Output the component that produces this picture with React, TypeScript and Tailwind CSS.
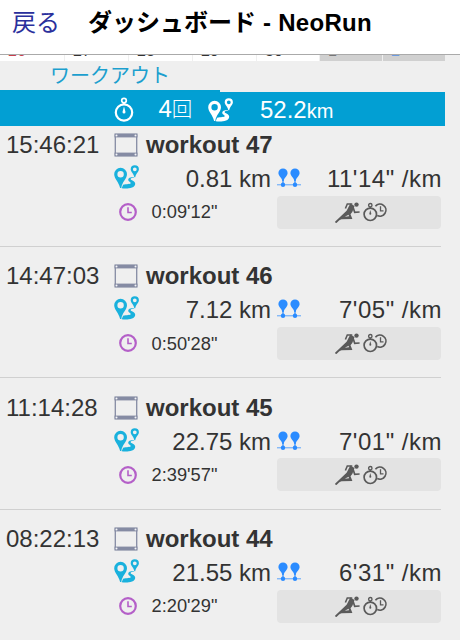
import React from 'react';

interface Workout {
  time: string;
  title: string;
  distance: string;
  pace: string;
  duration: string;
}

const workouts: Workout[] = [
  { time: '15:46:21', title: 'workout 47', distance: '0.81 km', pace: '11\'14" /km', duration: '0:09\'12"' },
  { time: '14:47:03', title: 'workout 46', distance: '7.12 km', pace: '7\'05" /km', duration: '0:50\'28"' },
  { time: '11:14:28', title: 'workout 45', distance: '22.75 km', pace: '7\'01" /km', duration: '2:39\'57"' },
  { time: '08:22:13', title: 'workout 44', distance: '21.55 km', pace: '6\'31" /km', duration: '2:20\'29"' },
];

const days = [
  { label: '26', cell: 'w-[64px] bg-white', text: 'text-[#c8404c]' },
  { label: '27', cell: 'w-[63px] bg-white', text: 'text-[#333]' },
  { label: '28', cell: 'w-[63px] bg-white', text: 'text-[#333]' },
  { label: '29', cell: 'w-[63px] bg-white', text: 'text-[#333]' },
  { label: '30', cell: 'w-[62px] bg-white', text: 'text-[#333]' },
  { label: '1', cell: 'w-[62px] bg-[#d0d0d0]', text: 'text-[#777]' },
  { label: '2', cell: 'w-[62px] bg-[#d0d0d0]', text: 'text-[#6c9be0]' },
];

const StopwatchIcon = ({ className }: { className: string }) => (
  <svg viewBox="0 0 20 25" fill="none" stroke="currentColor" className={className}>
    <circle cx="10" cy="15.500" r="8.200" strokeWidth="2.200" />
    <circle cx="10" cy="3.600" r="2.300" strokeWidth="1.700" />
    <path d="M10 5.500v2" strokeWidth="2.400" />
    <path d="M10 9.500l1.500 5.500a1.500 1.500 0 1 1-3 0z" fill="currentColor" stroke="none" />
  </svg>
);

const RouteIcon = ({ className }: { className: string }) => (
  <svg viewBox="0 0 25 24" fill="currentColor" className={className}>
    <path
      fillRule="evenodd"
      d="M6.600 2.800A6.400 6.400 0 0 0 .2 9.200c0 4.400 4.600 7.600 5.900 13.800h1.200C8 16.800 13 13.600 13 9.200a6.400 6.400 0 0 0-6.400-6.400zM6.600 6a3.200 3.200 0 1 1 0 6.400 3.200 3.200 0 0 1 0-6.400z"
    />
    <path
      fillRule="evenodd"
      d="M20.800.2a4.100 4.100 0 0 0-4.100 4.100c0 2.700 3 4.200 3.700 8h.8c.7-3.800 3.700-5.300 3.700-8A4.100 4.100 0 0 0 20.800.2zM20.800 2.400a1.900 1.900 0 1 1 0 3.800 1.900 1.900 0 0 1 0-3.800z"
    />
    <path d="M20 12.100c-3.900.2-6 1.200-5.800 2.800.2 1.500 2.700 2 2.600 3.200-.2 1.300-4.300 1-7.700 1.700L7.700 23.300c4.300.6 13.500.5 13.500-4.500 0-2.900-4.600-3.400-4.600-4.700 0-.8 1.600-1.400 3.400-1.500z" />
  </svg>
);

const FilmIcon = () => (
  <svg viewBox="0 0 24 24" className="h-6 w-6">
    <rect x="1.300" y="2" width="21.400" height="20" fill="none" stroke="#858ba3" strokeWidth="1.300" />
    <rect x=".5" y=".4" width="23" height="4" fill="#858ba3" />
    <rect x=".5" y="19.600" width="23" height="4" fill="#858ba3" />
    <g fill="#f4f4f8">
      <circle cx="2.500" cy="2.500" r="1" />
      <circle cx="21.500" cy="2.500" r="1" />
      <circle cx="2.500" cy="21.500" r="1" />
      <circle cx="21.500" cy="21.500" r="1" />
    </g>
  </svg>
);

const PaceIcon = () => (
  <svg viewBox="0 0 24 20" fill="#2b8cff" className="h-5 w-6 -translate-y-px">
    <path d="M6 .4A4.600 4.600 0 0 0 1.400 5c0 3.200 3.600 4.500 3.900 8h1.400c.3-3.500 3.900-4.800 3.900-8A4.600 4.600 0 0 0 6 .4z" />
    <path d="M18 .4A4.600 4.600 0 0 0 13.400 5c0 3.200 3.600 4.500 3.900 8h1.400c.3-3.500 3.900-4.800 3.900-8A4.600 4.600 0 0 0 18 .4z" />
    <path d="M5.400 10h1.200v6H5.400zM17.400 10h1.200v6h-1.200z" />
    <circle cx="6" cy="16.700" r="2.200" />
    <circle cx="18" cy="16.700" r="2.200" />
    <path d="M0 16.800h24" stroke="#2b8cff" strokeWidth="1" strokeOpacity=".75" />
  </svg>
);

const ClockIcon = () => (
  <svg viewBox="0 0 18 18" fill="none" stroke="#b45fc8" className="h-[18px] w-[18px]">
    <circle cx="9" cy="9" r="7.800" strokeWidth="2.200" />
    <path d="M9 4.300v5.200h3.800" strokeWidth="1.600" />
  </svg>
);

const RunnerIcon = () => (
  <svg viewBox="0 0 25 21" fill="none" stroke="#5a5a5a" className="h-[21px] w-[25px]">
    <circle cx="21.500" cy="2.600" r="2.200" fill="#5a5a5a" stroke="none" />
    <path d="M10.400 6.500l1.900-4.500h5" strokeWidth="1.600" />
    <path d="M15.300 1.600l4.200 2.400-2.200 6-1.800 2.300 1.900 4.600-10.700.3-3 .8 7.200-8 1.500-2.800z" fill="#5a5a5a" stroke="none" />
    <path d="M17.800 4.600l1.900 5.700 4.900-.3" strokeWidth="1.700" />
    <path d="M.5 20.600L12 9.800" strokeWidth="1.900" />
    <path d="M9.800 14.700l3.800-1.900.4 1.500z" fill="#e3e3e3" stroke="none" />
  </svg>
);

const TimersIcon = () => (
  <svg viewBox="0 0 25 20" fill="none" stroke="#5a5a5a" className="h-5 w-[25px]">
    <circle cx="7.300" cy="12.300" r="6.200" strokeWidth="1.700" />
    <circle cx="7.300" cy="3.200" r="1.700" strokeWidth="1.400" />
    <path d="M7.300 4.800v1.500" strokeWidth="1.600" />
    <path d="M7.300 8l1 3.800a1 1 0 1 1-2 0z" fill="#5a5a5a" stroke="none" />
    <path d="M12.400 4.200A6 6 0 1 1 14.200 13.500" strokeWidth="1.700" />
    <path d="M17.500 4.300v4.500h3" strokeWidth="1.300" />
  </svg>
);

const WorkoutRow = ({ workout, first }: { workout: Workout; first: boolean }) => (
  <li className={`flex w-[441px] border-b border-[#d0d0d0] pb-[17px] ${first ? 'pt-px' : 'pt-[11.400px]'}`}>
    <time className="w-[113px] shrink-0 pl-1.5 text-[24px] leading-[36px]">{workout.time}</time>
    <div className="flex-1">
      <div className="flex h-9 items-center gap-2 pl-px">
        <FilmIcon />
        <h3 className="text-[24px] leading-9 font-bold">{workout.title}</h3>
      </div>
      <div className="flex h-8 items-center pl-px text-[24px] leading-8">
        <RouteIcon className="h-6 w-[25px] -translate-y-[2px] text-[#19b1dd]" />
        <span className="flex-1 text-right">{workout.distance}</span>
        <span className="-mr-px flex w-[171px] items-center justify-between pl-[6px]">
          <PaceIcon />
          <span className="tracking-[0.500px]">{workout.pace}</span>
        </span>
      </div>
      <div className="flex h-[34px] items-center pl-[5.500px]">
        <ClockIcon />
        <span className="flex-1 pl-[15px] text-[18.300px]">{workout.duration}</span>
        <button className="flex h-[33px] w-[164px] items-center justify-center gap-[3px] rounded bg-[#e3e3e3] pl-1">
          <RunnerIcon />
          <TimersIcon />
        </button>
      </div>
    </div>
  </li>
);

export default function App() {
  return (
    <div className="h-[640px] w-[460px] overflow-hidden bg-[#efefef] font-['Liberation_Sans','Noto_Sans_CJK_JP',sans-serif] text-[#333]">
      <header className="flex h-[55px] items-center border-b border-[#aaa] bg-white pb-[9px] pl-3 whitespace-nowrap text-black">
        <button className="w-[76px] text-left text-[24px] text-[#2a2f9c]">戻る</button>
        <h1 className="text-[24px] font-bold">
          ダッシュボード<span className="tracking-[0.300px]"> - NeoRun</span>
        </h1>
      </header>

      <div className="flex h-1.5 gap-px overflow-hidden">
        {days.map((day) => (
          <div key={day.label} className={`shrink-0 ${day.cell}`}>
            <span className={`block -translate-y-[14px] pl-2 text-[16px] leading-5 ${day.text}`}>{day.label}</span>
          </div>
        ))}
      </div>

      <div className="flex h-[31px]">
        <div className="w-[220px] border-b-2 border-[#029fd1] pt-px text-center text-[20px] leading-[29px] text-[#1c9fce]">
          ワークアウト
        </div>
      </div>

      <div className="flex h-[34px] w-[445px] items-center bg-[#029fd3] pt-px text-[24px] text-white">
        <StopwatchIcon className="ml-[113.500px] h-[25px] w-5" />
        <span className="ml-[25px] w-[49.500px] leading-8">
          4<span className="text-[20.500px] font-light">回</span>
        </span>
        <RouteIcon className="h-6 w-[25px]" />
        <span className="ml-[27px]">
          52.2<span className="text-[20px]">km</span>
        </span>
      </div>

      <ul>
        {workouts.map((workout, index) => (
          <WorkoutRow key={workout.title} workout={workout} first={index === 0} />
        ))}
      </ul>
    </div>
  );
}
